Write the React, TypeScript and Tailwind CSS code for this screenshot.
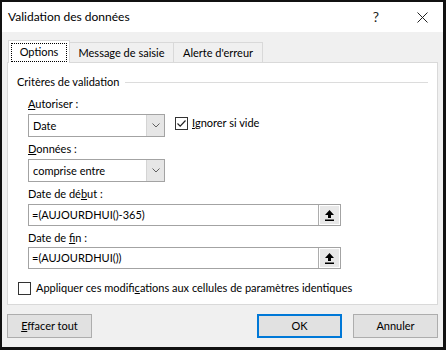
import React from "react"

const font = { fontFamily: '"Segoe UI", Lato, sans-serif' }

function Chevron() {
    return (
        <svg width="8" height="5" viewBox="0 0 8 5" className="block">
            <path d="M0.5 0.5 L4 4 L7.5 0.5" fill="none" stroke="#606060" strokeWidth="1" />
        </svg>
    )
}

function RefArrow() {
    return (
        <svg width="9" height="11" viewBox="0 0 9 11" className="block">
            <path d="M4.5 0 L9 5 L6 5 L6 8 L3 8 L3 5 L0 5 Z" fill="#000" />
            <rect x="0" y="9.5" width="9" height="1.5" fill="#000" />
        </svg>
    )
}

function Select({ value }: { value: string }) {
    return (
        <div className="flex h-[23px] w-[137px] border border-[#a3a3a3] bg-white">
            <div className="flex flex-1 items-center pl-[4px] text-black">{value}</div>
            <div className="flex w-[18px] items-center justify-center border-l border-[#d4d4d4] bg-[#e6e6e6]">
                <Chevron />
            </div>
        </div>
    )
}

function RefInput({ value }: { value: string }) {
    return (
        <div className="flex h-[22px] w-[313px] border border-[#a3a3a3] bg-white">
            <div className="flex flex-1 items-center pl-[3px] text-black">{value}</div>
            <div className="flex w-[22px] items-center justify-center border-l border-[#adadad] bg-[#e8e8e8] shadow-[inset_1px_1px_0_#fff,inset_-1px_-1px_0_#fff]">
                <RefArrow />
            </div>
        </div>
    )
}

function Check({ checked }: { checked?: boolean }) {
    return (
        <div className="flex h-[13px] w-[13px] shrink-0 items-center justify-center border border-[#333] bg-white">
            {checked && (
                <svg width="11" height="11" viewBox="0 0 11 11" className="block">
                    <path d="M1.5 5.5 L4.2 8.2 L9.5 2.5" fill="none" stroke="#222" strokeWidth="1.2" />
                </svg>
            )}
        </div>
    )
}

export default function App() {
    return (
        <div style={font} className="flex h-[350px] w-[446px] flex-col border-t-2 border-l-2 border-r-[3px] border-b-[3px] border-[#111] bg-[#f0f0f0] text-[11px] leading-[16px] text-black">
            <div className="flex h-[30px] items-center bg-white pl-[6px]">
                <span className="flex-1 text-[12px]">Validation des données</span>
                <span className="mr-[38px] text-[14px] text-[#222]">?</span>
                <svg width="11" height="11" viewBox="0 0 11 11" className="mr-[15px] block">
                    <path d="M0.5 0.5 L10.5 10.5 M10.5 0.5 L0.5 10.5" stroke="#222" strokeWidth="1" />
                </svg>
            </div>

            <div className="flex flex-1 flex-col px-[5px] pt-[8px]">
                <div className="flex h-[22px] items-end pl-[1px]">
                    <div className="relative z-10 -mb-px flex h-[23px] w-[62px] items-center justify-center border-x border-t border-[#d9d9d9] bg-white">
                        <div className="flex h-[19px] w-[56px] items-center justify-center border border-dotted border-black">Options</div>
                    </div>
                    <div className="flex h-[20px] w-[104px] items-center justify-center border-t border-r border-[#d9d9d9]">Message de saisie</div>
                    <div className="flex h-[20px] w-[89px] items-center justify-center border-t border-r border-[#d9d9d9]">Alerte d'erreur</div>
                </div>

                <div className="flex h-[243px] flex-col border border-[#d9d9d9] bg-white pt-[11px]">
                    <div className="flex h-[16px] items-center pl-[9px] pr-[9px]">
                        <span>Critères de validation</span>
                        <div className="ml-[6px] h-px flex-1 bg-[#dcdcdc]" />
                    </div>

                    <div className="flex flex-col pl-[20px]">
                        <div className="mt-[6px] h-[16px]"><u>A</u>utoriser :</div>
                        <div className="mt-[2px] flex items-start">
                            <Select value="Date" />
                            <div className="ml-[10px] mt-[1px] flex items-center">
                                <Check checked />
                                <span className="ml-[4px]"><u>I</u>gnorer si vide</span>
                            </div>
                        </div>
                        <div className="mt-[4px] h-[16px]"><u>D</u>onnées :</div>
                        <div className="mt-[2px]">
                            <Select value="comprise entre" />
                        </div>
                        <div className="mt-[4px] h-[16px]">Date de dé<u>b</u>ut :</div>
                        <div className="mt-[2px]">
                            <RefInput value="=(AUJOURDHUI()-365)" />
                        </div>
                        <div className="mt-[4px] h-[16px]">Date de <u>f</u>in :</div>
                        <div className="mt-[1px]">
                            <RefInput value="=(AUJOURDHUI())" />
                        </div>
                    </div>

                    <div className="mt-[11px] flex items-center pl-[10px]">
                        <Check />
                        <span className="ml-[5px]">Appliquer ces modifi<u>c</u>ations aux cellules de paramètres identiques</span>
                    </div>
                </div>

                <div className="mt-[9px] flex">
                    <button className="flex h-[24px] w-[85px] items-center justify-center border border-[#adadad] bg-[#e1e1e1]">
                        <span><u>E</u>ffacer tout</span>
                    </button>
                    <div className="flex-1" />
                    <button className="flex h-[24px] w-[85px] items-center justify-center border-2 border-[#0078d7] bg-[#e1e1e1]">OK</button>
                    <button className="ml-[11px] flex h-[24px] w-[85px] items-center justify-center border border-[#adadad] bg-[#e1e1e1]">Annuler</button>
                </div>
            </div>
        </div>
    )
}
